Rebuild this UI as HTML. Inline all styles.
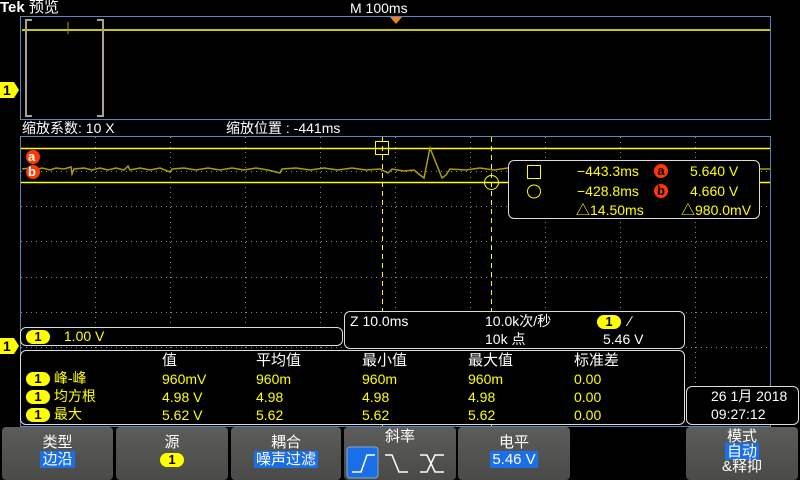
<!DOCTYPE html>
<html><head><meta charset="utf-8"><style>
body{margin:0;background:#000;width:800px;height:480px;overflow:hidden;position:relative;font-family:"Liberation Sans","Noto Sans CJK SC",sans-serif;color:#fff}
.t{position:absolute;white-space:nowrap;font-size:14px;line-height:16px}
.y{color:#ff0}
.btn{position:absolute;top:427px;height:53px;background:linear-gradient(#5c5c5a,#4a4a48);border-radius:4px;text-align:center;font-size:15px;line-height:17px}
.hl{background:#1a6fe8;color:#fff;padding:0 2px}
.pill{display:inline-block;background:#ff0;color:#000;border-radius:8px;width:24px;height:14px;line-height:14px;font-size:13px;font-weight:bold;text-align:center}
.box{position:absolute;border:1px solid #ddd;border-radius:6px}
</style></head><body>
<svg width="800" height="480" style="position:absolute;left:0;top:0">
<rect x="20.5" y="16.5" width="750" height="103" fill="none" stroke="#5a86c0"/>
<polyline points="22,30 770,30" stroke="#c8c800" stroke-width="2"/>
<line x1="68" y1="22" x2="68" y2="34" stroke="#aaa000"/>
<path d="M32,20H26V116H32M97,20H103V116H97" fill="none" stroke="#aaa090" stroke-width="2"/>
<path d="M390,17H402L396,24Z" fill="#f08020"/>
<rect x="20.5" y="136.5" width="750" height="290" fill="none" stroke="#5a86c0"/>
<g stroke="#888" stroke-width="1" stroke-dasharray="1,4">
<line x1="95.5" y1="137" x2="95.5" y2="425"/><line x1="170.5" y1="137" x2="170.5" y2="425"/><line x1="245.5" y1="137" x2="245.5" y2="425"/><line x1="320.5" y1="137" x2="320.5" y2="425"/><line x1="395.5" y1="137" x2="395.5" y2="425"/><line x1="470.5" y1="137" x2="470.5" y2="425"/><line x1="545.5" y1="137" x2="545.5" y2="425"/><line x1="620.5" y1="137" x2="620.5" y2="425"/><line x1="695.5" y1="137" x2="695.5" y2="425"/>
<line x1="21" y1="171.5" x2="770" y2="171.5"/><line x1="21" y1="206.5" x2="770" y2="206.5"/><line x1="21" y1="241.5" x2="770" y2="241.5"/><line x1="21" y1="277.5" x2="770" y2="277.5"/><line x1="21" y1="312.5" x2="770" y2="312.5"/><line x1="21" y1="347.5" x2="770" y2="347.5"/>
</g>
<line x1="21" y1="148.5" x2="770" y2="148.5" stroke="#ff0" stroke-width="1.5"/>
<line x1="21" y1="182.5" x2="770" y2="182.5" stroke="#ff0" stroke-width="1.5"/>
<line x1="382.5" y1="137" x2="382.5" y2="426" stroke="#ff0" stroke-dasharray="5,4"/>
<line x1="491.5" y1="137" x2="491.5" y2="426" stroke="#ff0" stroke-dasharray="5,4"/>
<rect x="375.5" y="141.5" width="13" height="13" fill="none" stroke="#ff0"/>
<circle cx="491.5" cy="182.5" r="7" fill="none" stroke="#ff0"/>
<polyline points="22,169 30,168 36,170 42,168 50,170 56,168 64,169 71,167 72,174 74,169 84,168 92,170 100,168 108,170 116,168 124,170 128,166 130,170 140,168 150,170 160,168 170,172 172,169 184,168 196,170 208,168 220,170 232,168 244,170 256,168 268,170 280,173 282,169 296,168 310,170 324,168 338,170 352,168 366,170 380,169 388,173 392,169 404,171 414,170 420,175 424,178 430,148 442,178 446,175 450,169 466,170 480,168 494,170 508,168 770,169" fill="none" stroke="#a8a000" stroke-width="1.5"/>
<path d="M0,82H14L19,90L14,98H0Z" fill="#ff0"/>
<path d="M0,338H14L19,346L14,354H0Z" fill="#ff0"/>
<circle cx="33" cy="157" r="7" fill="#ff3a00"/><circle cx="33" cy="172" r="7" fill="#ff3a00"/>
</svg>
<div class="t" style="left:0;top:0;font-weight:bold;font-size:15px">Tek <span style="font-weight:normal">预览</span></div>
<div class="t" style="left:350px;top:0">M 100ms</div>
<div class="t" style="left:3px;top:82px;color:#000;font-weight:bold">1</div>
<div class="t" style="left:3px;top:338px;color:#000;font-weight:bold">1</div>
<div class="t" style="left:22px;top:120px">缩放系数: 10 X</div>
<div class="t" style="left:226px;top:120px">缩放位置 : -441ms</div>
<div class="t" style="left:28px;top:149px;font-weight:bold;font-size:13px">a</div>
<div class="t" style="left:28px;top:164px;font-weight:bold;font-size:13px">b</div>
<div class="box" style="left:508px;top:160px;width:250px;height:57px;background:#000"></div>
<svg width="20" height="40" style="position:absolute;left:524px;top:162px"><rect x="3.5" y="3.5" width="13" height="13" fill="none" stroke="#ff0"/><circle cx="10" cy="29.5" r="6.5" fill="none" stroke="#ff0"/></svg>
<div class="t y" style="left:577px;top:163px">−443.3ms</div>
<div style="position:absolute;left:654px;top:164px;width:14px;height:14px;border-radius:7px;background:#ff3a00;color:#000;font-size:13px;font-weight:bold;text-align:center;line-height:13px">a</div>
<div class="t y" style="left:690px;top:163px">5.640 V</div>
<div class="t y" style="left:577px;top:183px">−428.8ms</div>
<div style="position:absolute;left:654px;top:184px;width:14px;height:14px;border-radius:7px;background:#ff3a00;color:#000;font-size:13px;font-weight:bold;text-align:center;line-height:13px">b</div>
<div class="t y" style="left:690px;top:183px">4.660 V</div>
<div class="t y" style="left:576px;top:202px">△14.50ms</div><div class="t y" style="left:681px;top:202px">△980.0mV</div>
<div class="box" style="left:20px;top:327px;width:321px;height:17px;background:#000"></div>
<div class="t" style="left:26px;top:328px"><span class="pill">1</span> <span class="y" style="margin-left:10px">1.00 V</span></div>
<div class="box" style="left:344px;top:311px;width:339px;height:36px;background:#000"></div>
<div class="t" style="left:350px;top:313px">Z 10.0ms</div>
<div class="t" style="left:485px;top:313px">10.0k次/秒</div>
<div class="t" style="left:597px;top:313px"><span class="pill">1</span> &nbsp;∕</div>
<div class="t" style="left:485px;top:331px">10k 点</div>
<div class="t" style="left:603px;top:331px">5.46 V</div>
<div class="box" style="left:20px;top:350px;width:663px;height:73px;background:#000"></div>
<div class="t" style="left:162px;top:353px;font-size:15px">值</div><div class="t" style="left:256px;top:353px;font-size:15px">平均值</div><div class="t" style="left:362px;top:353px;font-size:15px">最小值</div><div class="t" style="left:468px;top:353px;font-size:15px">最大值</div><div class="t" style="left:574px;top:353px;font-size:15px">标准差</div>
<div class="t y" style="left:26px;top:370px"><span class="pill">1</span> 峰-峰</div>
<div class="t y" style="left:26px;top:388px"><span class="pill">1</span> 均方根</div>
<div class="t y" style="left:26px;top:406px"><span class="pill">1</span> 最大</div>
<div class="t y" style="left:162px;top:371px">960mV</div><div class="t y" style="left:256px;top:371px">960m</div><div class="t y" style="left:362px;top:371px">960m</div><div class="t y" style="left:468px;top:371px">960m</div><div class="t y" style="left:574px;top:371px">0.00</div>
<div class="t y" style="left:162px;top:389px">4.98 V</div><div class="t y" style="left:256px;top:389px">4.98</div><div class="t y" style="left:362px;top:389px">4.98</div><div class="t y" style="left:468px;top:389px">4.98</div><div class="t y" style="left:574px;top:389px">0.00</div>
<div class="t y" style="left:162px;top:407px">5.62 V</div><div class="t y" style="left:256px;top:407px">5.62</div><div class="t y" style="left:362px;top:407px">5.62</div><div class="t y" style="left:468px;top:407px">5.62</div><div class="t y" style="left:574px;top:407px">0.00</div>
<div class="box" style="left:686px;top:386px;width:111px;height:37px;background:#000"></div>
<div class="t" style="left:711px;top:388px">26 1月 2018</div>
<div class="t" style="left:711px;top:406px">09:27:12</div>
<div class="btn" style="left:2px;width:111px"><div style="margin-top:7px">类型</div><span class="hl">边沿</span></div>
<div class="btn" style="left:116px;width:112px"><div style="margin-top:7px">源</div><span class="pill">1</span></div>
<div class="btn" style="left:231px;width:110px"><div style="margin-top:7px">耦合</div><span class="hl">噪声过滤</span></div>
<div class="btn" style="left:344px;width:112px"><div style="margin-top:1px">斜率</div>
<svg width="112" height="34" style="position:absolute;left:0;top:19px"><rect x="3" y="1" width="31" height="31" rx="3" fill="#1a6fe8" stroke="#8ab" /><path d="M8,26H17L23,9H31" fill="none" stroke="#fff" stroke-width="1.5"/><path d="M41,9H48L55,26H64" fill="none" stroke="#fff" stroke-width="1.5"/><path d="M76,9H83L91,26H100M76,26H83L91,9H100" fill="none" stroke="#fff" stroke-width="1.5"/></svg></div>
<div class="btn" style="left:458px;width:112px"><div style="margin-top:7px">电平</div><span class="hl">5.46 V</span></div>
<div class="btn" style="left:686px;width:112px;line-height:15px"><div style="margin-top:2px">模式</div><span class="hl">自动</span><div>&amp;释抑</div></div>
</body></html>
